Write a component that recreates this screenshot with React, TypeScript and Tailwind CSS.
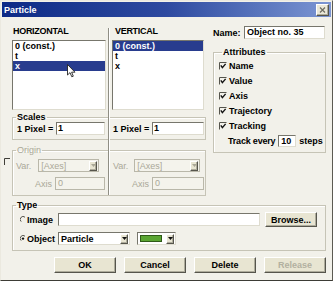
import type { ReactNode } from 'react';

const sunken =
  'border border-t-[#77766c] border-l-[#77766c] border-r-[#dedccf] border-b-[#dedccf] bg-white';
const raised =
  'border border-t-white border-l-white border-r-[#56554c] border-b-[#56554c] bg-[#e8e5d2] shadow-[inset_-1px_-1px_0_#aeac9c]';

function Check() {
  return (
    <svg width="8" height="8" viewBox="0 0 8 8" className="shrink-0">
      <path d="M0.5 7.5V0.5H7.5" stroke="#55544c" fill="none" />
      <path d="M1.8 3.3L3.4 5.6L6.6 1.9" stroke="#111" strokeWidth="1.4" fill="none" />
    </svg>
  );
}

function Radio({ on }: { on?: boolean }) {
  return (
    <svg width="6" height="7" viewBox="0 0 6 7" className="shrink-0">
      <path d="M5 1.2A2.6 2.6 0 0 0 1.2 5.6" stroke="#55544c" fill="none" />
      {on && <circle cx="3" cy="3.6" r="1.2" fill="#111" />}
    </svg>
  );
}

function DropButton({ disabled }: { disabled?: boolean }) {
  return (
    <div className={`flex h-full w-[8px] items-center justify-center ${raised} ${disabled ? 'bg-[#e4e1cf]' : ''}`}>
      <svg width="5" height="3" viewBox="0 0 5 3">
        <path d="M0 0H5L2.5 3Z" fill={disabled ? '#a9a796' : '#111'} />
      </svg>
    </div>
  );
}

function Group({
  label,
  disabled,
  className = '',
  children,
}: {
  label: string;
  disabled?: boolean;
  className?: string;
  children: ReactNode;
}) {
  return (
    <fieldset className={`border border-[#c6c4b6] shadow-[inset_1px_1px_0_#fff] ${className}`}>
      <legend className={`ml-[3px] px-[1px] leading-[10px] ${disabled ? 'font-normal text-[#aaa898]' : ''}`}>
        {label}
      </legend>
      {children}
    </fieldset>
  );
}

function ListBox({ items, selected }: { items: string[]; selected: number }) {
  return (
    <div className={`mt-[4px] h-[70px] ${sunken}`}>
      {items.map((item, i) => (
        <div
          key={item}
          className={`h-[10px] pl-[2px] leading-[10px] ${i === selected ? 'bg-[#283c8e] text-white' : ''}`}
        >
          {item}
        </div>
      ))}
    </div>
  );
}

function DisabledSelect({ width }: { width: string }) {
  return (
    <div className={`flex h-[13px] ${width} items-center border border-[#b9b7a9] bg-[#f4f3ec] pl-[2px] pr-[1px]`}>
      <span className="flex-1">[Axes]</span>
      <div className="h-[10px]">
        <DropButton disabled />
      </div>
    </div>
  );
}

const attributes = ['Name', 'Value', 'Axis', 'Trajectory', 'Tracking'];
const listItems = ['0 (const.)', 't', 'x'];

export default function App() {
  return (
    <div className="flex h-[281px] w-[333px] flex-col overflow-hidden border border-t-[#ebe9df] border-l-[#ebe9df] border-r-[#5c5b52] border-b-[#3d3c36] bg-[#f2f1ea] font-['Liberation_Sans',Arial,sans-serif] text-[9px] leading-[10px] font-bold text-black">
      {/* title bar */}
      <div className="mx-[1px] mt-[1px] flex h-[15px] items-center bg-linear-to-r from-[#0d2a86] via-[#2e4aa0] to-[#7d96d3] pl-[2px] pr-[2px]">
        <span className="text-[9px] text-white">Particle</span>
        <div className={`ml-auto flex h-[12px] w-[13px] items-center justify-center ${raised} bg-[#ebe8d8]`}>
          <svg width="7" height="6" viewBox="0 0 7 6">
            <path d="M1 0.5L6 5.5M6 0.5L1 5.5" stroke="#6d6c62" strokeWidth="1.2" />
          </svg>
        </div>
      </div>

      <div className="flex flex-col pl-[11px] pr-[6px] pt-[9px]">
        <div className="flex gap-[7px]">
          {/* left: axes */}
          <div className="relative w-[194px]">
            <div className="flex gap-[6px]">
              <div className="w-[94px]">
                <div className="pl-[1px] tracking-[-0.3px]">HORIZONTAL</div>
                <ListBox items={listItems} selected={2} />
              </div>
              <div className="w-[92px]">
                <div className="pl-[3px] tracking-[-0.3px]">VERTICAL</div>
                <ListBox items={listItems} selected={0} />
              </div>
            </div>

            <Group label="Scales" className="mt-[2px] pb-[4px]">
              <div className="flex h-[13px] items-center">
                <div className="flex w-[96px] items-center pl-[4px] pr-[4px]">
                  <span>1 Pixel =</span>
                  <div className={`ml-auto h-[13px] w-[49px] pl-[1px] ${sunken}`}>1</div>
                </div>
                <div className="flex w-[96px] items-center pl-[4px] pr-[1px]">
                  <span>1 Pixel =</span>
                  <div className={`ml-auto h-[13px] w-[52px] pl-[1px] ${sunken}`}>1</div>
                </div>
              </div>
            </Group>

            <Group label="Origin" disabled className="relative mt-[5px] pb-[5px] font-normal text-[#aaa898]">
              <svg width="6" height="7" viewBox="0 0 6 7" className="absolute -left-[9px] top-[3px]">
                <path d="M0.5 7V0.5H6" stroke="#3f3e38" fill="none" />
              </svg>
              <div className="mt-[4px] flex h-[13px] items-center">
                <div className="flex w-[96px] items-center pl-[3px]">
                  <span>Var.</span>
                  <div className="ml-[7px]">
                    <DisabledSelect width="w-[61px]" />
                  </div>
                </div>
                <div className="flex w-[96px] items-center pl-[4px]">
                  <span>Var.</span>
                  <div className="ml-[6px]">
                    <DisabledSelect width="w-[66px]" />
                  </div>
                </div>
              </div>
              <div className="mt-[5px] flex h-[13px] items-center">
                <div className="flex w-[96px] items-center pr-[4px]">
                  <span className="ml-auto">Axis</span>
                  <div className="ml-[3px] h-[13px] w-[50px] border border-[#b9b7a9] bg-[#f4f3ec] pl-[2px]">0</div>
                </div>
                <div className="flex w-[96px] items-center pr-[1px]">
                  <span className="ml-auto">Axis</span>
                  <div className="ml-[3px] h-[13px] w-[52px] border border-[#b9b7a9] bg-[#f4f3ec] pl-[2px]">0</div>
                </div>
              </div>
            </Group>

            <div className="absolute bottom-[1px] left-[96px] top-[2px] w-[2px] border-l border-r border-l-[#8f8e84] border-r-white" />

            {/* mouse pointer */}
            <svg width="9" height="14" viewBox="0 0 9 14" className="absolute left-[55px] top-[38px]">
              <path d="M0.5 0.5V11L3 8.6L4.8 12.8L6.3 12.2L4.6 8.2H8Z" fill="#fff" stroke="#222" strokeWidth="0.9" />
            </svg>
          </div>

          {/* right: name & attributes */}
          <div className="w-[113px]">
            <div className="flex h-[13px] items-center">
              <span>Name:</span>
              <div className={`ml-auto mr-[1px] h-[13px] w-[81px] pl-[2px] leading-[11px] ${sunken}`}>Object no. 35</div>
            </div>
            <Group label="Attributes" className="mt-[8px] pb-[4px] pl-[5px] pt-[1px]">
              {attributes.map((a) => (
                <div key={a} className="flex h-[15px] items-center">
                  <Check />
                  <span className="ml-[2px]">{a}</span>
                </div>
              ))}
              <div className="flex h-[15px] items-center pl-[9px]">
                <span className="tracking-[-0.2px]">Track every</span>
                <div className={`ml-[3px] h-[12px] w-[18px] pl-[2px] leading-[10px] ${sunken}`}>10</div>
                <span className="ml-[3px]">steps</span>
              </div>
            </Group>
          </div>
        </div>

        <Group label="Type" className="mt-[4px] pb-[5px]">
          <div className="mt-[2px] flex h-[15px] items-center">
            <div className="flex w-[45px] items-center pl-[7px]">
              <Radio />
              <span className="ml-[1px]">Image</span>
            </div>
            <div className={`h-[13px] w-[202px] ${sunken}`} />
            <div className={`ml-[5px] flex h-[15px] w-[52px] items-center justify-center ${raised}`}>Browse...</div>
          </div>
          <div className="mt-[5px] flex h-[13px] items-center">
            <div className="flex w-[45px] items-center pl-[7px]">
              <Radio on />
              <span className="ml-[1px]">Object</span>
            </div>
            <div className={`flex h-[13px] w-[72px] items-center pl-[2px] pr-[1px] ${sunken}`}>
              <span className="flex-1">Particle</span>
              <div className="h-[10px]">
                <DropButton />
              </div>
            </div>
            <div className={`ml-[7px] flex h-[13px] w-[39px] items-center pl-[2px] pr-[1px] ${sunken}`}>
              <div className="h-[7px] w-[22px] border border-[#2f5a18] bg-[#5aa532]" />
              <div className="ml-auto h-[10px]">
                <DropButton />
              </div>
            </div>
          </div>
        </Group>

        <div className="mt-[6px] flex justify-end gap-[8px]">
          {['OK', 'Cancel', 'Delete'].map((b) => (
            <div key={b} className={`flex h-[16px] w-[62px] items-center justify-center ${raised}`}>
              {b}
            </div>
          ))}
          <div className={`flex h-[16px] w-[62px] items-center justify-center text-[#b2b0a0] ${raised}`}>Release</div>
        </div>
      </div>
    </div>
  );
}
